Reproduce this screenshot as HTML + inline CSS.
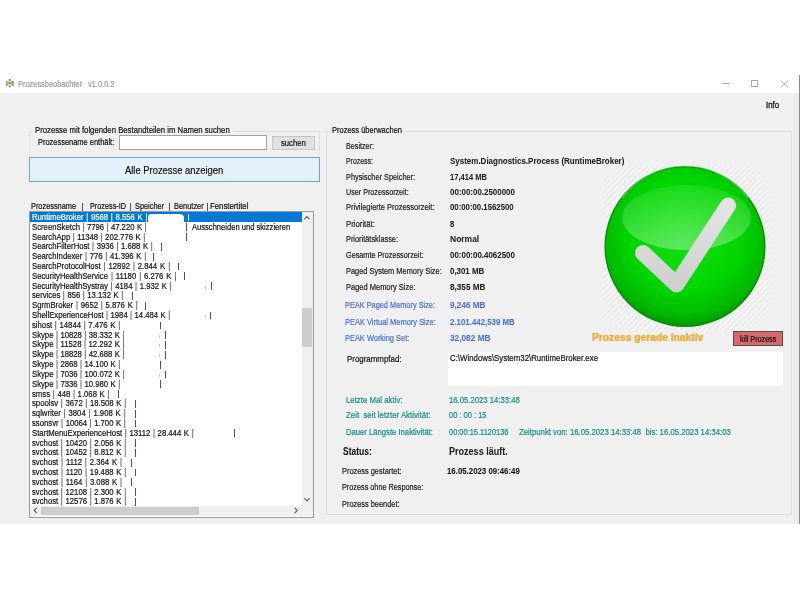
<!DOCTYPE html>
<html><head><meta charset="utf-8"><style>
html,body{margin:0;padding:0;}
body{width:800px;height:600px;position:relative;overflow:hidden;background:#fff;font-family:"Liberation Sans",sans-serif;}
.t{position:absolute;white-space:pre;line-height:0;transform-origin:0 0;-webkit-text-stroke:0.2px currentColor;}
.r{position:absolute;}
.p{color:#4a3a58;-webkit-text-stroke:0.1px #4a3a58;}
</style></head><body>
<div class="t" style="left:17.60px;top:84.05px;font-size:8.5px;color:#9a9a9a;transform:scaleX(0.8728);">Prozessbeobachter   v1.0.0.2</div>
<div class="r" style="left:721.5px;top:83px;width:7px;height:0.9px;background:#a8a8a8"></div>
<div class="r" style="left:751px;top:80.3px;width:7px;height:6.5px;border:0.9px solid #a8a8a8;box-sizing:border-box"></div>
<svg class="r" style="left:780px;top:79.8px" width="9" height="8" viewBox="0 0 9 8"><path d="M0.7 0.5 L8 7.5 M8 0.5 L0.7 7.5" stroke="#a8a8a8" stroke-width="0.9" fill="none"/></svg>
<div class="r" style="left:0px;top:93px;width:799px;height:430.5px;background:#f0f0f0"></div>
<div class="r" style="left:794px;top:93px;width:0.6px;height:430.5px;background:#e4e4e4"></div>
<div class="r" style="left:797px;top:93px;width:0.6px;height:430.5px;background:#e4e4e4"></div>
<div class="r" style="left:799px;top:75px;width:1px;height:448.5px;background:#8a8a8a"></div>
<div class="t" style="left:766.00px;top:104.55px;font-size:8.5px;color:#222;transform:scaleX(0.9310);-webkit-text-stroke:0.35px #222;">Info</div>
<div class="r" style="left:29px;top:130.5px;width:290.5px;height:23px;border:1px solid #dedede;border-bottom:none;box-sizing:border-box"></div>
<div class="r" style="left:33px;top:125px;width:200px;height:8px;background:#f0f0f0"></div>
<div class="t" style="left:35.00px;top:129.75px;font-size:8.5px;color:#111;transform:scaleX(0.9117);">Prozesse mit folgenden Bestandteilen im Namen suchen</div>
<div class="t" style="left:37.50px;top:142.05px;font-size:8.5px;color:#111;transform:scaleX(0.8771);">Prozessename enthält:</div>
<div class="r" style="left:118.8px;top:135.4px;width:148.5px;height:14.8px;background:#fff;border:1px solid #a2a2a2;box-sizing:border-box"></div>
<div class="r" style="left:272.3px;top:136.2px;width:43.2px;height:13.4px;background:#e1e1e1;border:1px solid #c4c4c4;box-sizing:border-box"></div>
<div class="t" style="left:281.00px;top:142.55px;font-size:8.5px;color:#111;transform:scaleX(0.9048);">suchen</div>
<div class="r" style="left:29.3px;top:156.7px;width:290.3px;height:25.2px;background:#e5f1fb;border:1px solid #62a8ea;box-sizing:border-box"></div>
<div class="t" style="left:125.10px;top:169.73px;font-size:10.6px;color:#111;transform:scaleX(0.8865);">Alle Prozesse anzeigen</div>
<div class="t" style="left:31.00px;top:206.35px;font-size:8.5px;color:#111;transform:scaleX(0.8659);">Prozessname</div>
<div class="t" style="left:89.50px;top:206.35px;font-size:8.5px;color:#111;transform:scaleX(0.8564);">Prozess-ID</div>
<div class="t" style="left:135.40px;top:206.35px;font-size:8.5px;color:#111;transform:scaleX(0.8674);">Speicher</div>
<div class="t" style="left:174.40px;top:206.35px;font-size:8.5px;color:#111;transform:scaleX(0.8730);">Benutzer</div>
<div class="t" style="left:210.10px;top:206.35px;font-size:8.5px;color:#111;transform:scaleX(0.9133);">Fenstertitel</div>
<div class="r" style="left:82.25px;top:203px;width:0.7px;height:7.5px;background:#5a4a60"></div>
<div class="r" style="left:130.25px;top:203px;width:0.7px;height:7.5px;background:#5a4a60"></div>
<div class="r" style="left:168.65px;top:203px;width:0.7px;height:7.5px;background:#5a4a60"></div>
<div class="r" style="left:207.05px;top:203px;width:0.7px;height:7.5px;background:#5a4a60"></div>
<div class="r" style="left:28.5px;top:211px;width:285.5px;height:306.5px;background:#fff;border:1px solid #9a9a9a;box-sizing:border-box"></div>
<div class="r" style="left:29.5px;top:212px;width:272.5px;height:293.9px;overflow:hidden">
<div class="r" style="left:0px;top:0.30000000000001137px;width:272px;height:9.5px;background:#0078d7"></div>
<div class="t" style="left:2.40px;top:4.95px;font-size:8.5px;color:#fff;transform:scaleX(0.9085);word-spacing:0.615px;">RuntimeBroker | 9568 | 8.556 K |</div>
<div class="r" style="left:118.0px;top:2.100000000000011px;width:36.5px;height:14px;background:#fff;border-radius:3px 4px 0 0"></div>
<div class="r" style="left:158.65px;top:1.6000000000000112px;width:0.7px;height:7.8px;background:#fff"></div>
<div class="t" style="left:2.40px;top:14.76px;font-size:8.5px;color:#111;transform:scaleX(0.9085);word-spacing:0.272px;">ScreenSketch <span class="p">|</span> 7796 <span class="p">|</span> 47.220 K <span class="p">|</span></div>
<div class="r" style="left:156.55px;top:11.410000000000014px;width:0.7px;height:7.8px;background:#5a4a68"></div>
<div class="t" style="left:162.25px;top:14.76px;font-size:8.5px;color:#111;transform:scaleX(0.8924);">Ausschneiden und skizzieren</div>
<div class="t" style="left:2.40px;top:24.57px;font-size:8.5px;color:#111;transform:scaleX(0.9085);word-spacing:0.373px;">SearchApp <span class="p">|</span> 11348 <span class="p">|</span> 202.776 K <span class="p">|</span></div>
<div class="r" style="left:156.45000000000002px;top:21.220000000000017px;width:0.7px;height:7.8px;background:#5a4a68"></div>
<div class="t" style="left:2.40px;top:34.38px;font-size:8.5px;color:#111;transform:scaleX(0.9085);word-spacing:0.467px;">SearchFilterHost <span class="p">|</span> 3936 <span class="p">|</span> 1.688 K <span class="p">|</span></div>
<div class="r" style="left:131.45000000000002px;top:31.03000000000002px;width:0.7px;height:7.8px;background:#5a4a68"></div>
<div class="t" style="left:2.40px;top:44.19px;font-size:8.5px;color:#111;transform:scaleX(0.9085);word-spacing:0.611px;">SearchIndexer <span class="p">|</span> 776 <span class="p">|</span> 41.396 K <span class="p">|</span></div>
<div class="r" style="left:123.95000000000002px;top:40.840000000000025px;width:0.7px;height:7.8px;background:#5a4a68"></div>
<div class="t" style="left:2.40px;top:54.00px;font-size:8.5px;color:#111;transform:scaleX(0.9085);word-spacing:0.841px;">SearchProtocolHost <span class="p">|</span> 12892 <span class="p">|</span> 2.844 K <span class="p">|</span></div>
<div class="r" style="left:148.45000000000002px;top:50.65000000000003px;width:0.7px;height:7.8px;background:#5a4a68"></div>
<div class="t" style="left:2.40px;top:63.81px;font-size:8.5px;color:#111;transform:scaleX(0.9085);word-spacing:0.869px;">SecurityHealthService <span class="p">|</span> 11180 <span class="p">|</span> 6.276 K <span class="p">|</span></div>
<div class="r" style="left:154.45000000000002px;top:60.46000000000002px;width:0.7px;height:7.8px;background:#5a4a68"></div>
<div class="t" style="left:2.40px;top:73.62px;font-size:8.5px;color:#111;transform:scaleX(0.9085);word-spacing:0.530px;">SecurityHealthSystray <span class="p">|</span> 4184 <span class="p">|</span> 1.932 K <span class="p">|</span></div>
<div class="r" style="left:181.45000000000002px;top:70.27000000000002px;width:0.7px;height:7.8px;background:#5a4a68"></div>
<div class="r" style="left:175.1px;top:73.57000000000002px;width:0.8px;height:3px;background:#c8c8d0"></div>
<div class="t" style="left:2.40px;top:83.43px;font-size:8.5px;color:#111;transform:scaleX(0.9085);word-spacing:0.410px;">services <span class="p">|</span> 856 <span class="p">|</span> 13.132 K <span class="p">|</span></div>
<div class="r" style="left:102.15px;top:80.08000000000003px;width:0.7px;height:7.8px;background:#5a4a68"></div>
<div class="t" style="left:2.40px;top:93.24px;font-size:8.5px;color:#111;transform:scaleX(0.9085);word-spacing:0.708px;">SgrmBroker <span class="p">|</span> 9652 <span class="p">|</span> 5.876 K <span class="p">|</span></div>
<div class="r" style="left:115.95000000000002px;top:89.89000000000003px;width:0.7px;height:7.8px;background:#5a4a68"></div>
<div class="t" style="left:2.40px;top:103.05px;font-size:8.5px;color:#111;transform:scaleX(0.9085);word-spacing:0.289px;">ShellExperienceHost <span class="p">|</span> 1984 <span class="p">|</span> 14.484 K <span class="p">|</span></div>
<div class="r" style="left:180.95000000000002px;top:99.70000000000003px;width:0.7px;height:7.8px;background:#5a4a68"></div>
<div class="r" style="left:175.1px;top:103.00000000000003px;width:0.8px;height:3px;background:#c8c8d0"></div>
<div class="t" style="left:2.40px;top:112.86px;font-size:8.5px;color:#111;transform:scaleX(0.9085);word-spacing:0.566px;">sihost <span class="p">|</span> 14844 <span class="p">|</span> 7.476 K <span class="p">|</span></div>
<div class="r" style="left:130.95000000000002px;top:109.51000000000003px;width:0.7px;height:7.8px;background:#5a4a68"></div>
<div class="t" style="left:2.40px;top:122.67px;font-size:8.5px;color:#111;transform:scaleX(0.9085);word-spacing:0.331px;">Skype <span class="p">|</span> 10828 <span class="p">|</span> 38.332 K <span class="p">|</span></div>
<div class="r" style="left:135.15px;top:119.31999999999998px;width:0.7px;height:7.8px;background:#5a4a68"></div>
<div class="r" style="left:129.4px;top:122.61999999999998px;width:0.8px;height:3px;background:#c8c8d0"></div>
<div class="t" style="left:2.40px;top:132.48px;font-size:8.5px;color:#111;transform:scaleX(0.9085);word-spacing:0.436px;">Skype <span class="p">|</span> 11528 <span class="p">|</span> 12.292 K <span class="p">|</span></div>
<div class="r" style="left:135.15px;top:129.13000000000002px;width:0.7px;height:7.8px;background:#5a4a68"></div>
<div class="r" style="left:129.4px;top:132.43000000000004px;width:0.8px;height:3px;background:#c8c8d0"></div>
<div class="t" style="left:2.40px;top:142.29px;font-size:8.5px;color:#111;transform:scaleX(0.9085);word-spacing:0.331px;">Skype <span class="p">|</span> 18828 <span class="p">|</span> 42.688 K <span class="p">|</span></div>
<div class="r" style="left:135.15px;top:138.93999999999997px;width:0.7px;height:7.8px;background:#5a4a68"></div>
<div class="r" style="left:129.4px;top:142.23999999999998px;width:0.8px;height:3px;background:#c8c8d0"></div>
<div class="t" style="left:2.40px;top:152.10px;font-size:8.5px;color:#111;transform:scaleX(0.9085);word-spacing:0.330px;">Skype <span class="p">|</span> 2868 <span class="p">|</span> 14.100 K <span class="p">|</span></div>
<div class="r" style="left:130.95000000000002px;top:148.75000000000003px;width:0.7px;height:7.8px;background:#5a4a68"></div>
<div class="t" style="left:2.40px;top:161.91px;font-size:8.5px;color:#111;transform:scaleX(0.9085);word-spacing:0.331px;">Skype <span class="p">|</span> 7036 <span class="p">|</span> 100.072 K <span class="p">|</span></div>
<div class="r" style="left:135.15px;top:158.55999999999997px;width:0.7px;height:7.8px;background:#5a4a68"></div>
<div class="r" style="left:129.4px;top:161.85999999999999px;width:0.8px;height:3px;background:#c8c8d0"></div>
<div class="t" style="left:2.40px;top:171.72px;font-size:8.5px;color:#111;transform:scaleX(0.9085);word-spacing:0.330px;">Skype <span class="p">|</span> 7336 <span class="p">|</span> 10.980 K <span class="p">|</span></div>
<div class="r" style="left:130.95000000000002px;top:168.37000000000003px;width:0.7px;height:7.8px;background:#5a4a68"></div>
<div class="t" style="left:2.40px;top:181.53px;font-size:8.5px;color:#111;transform:scaleX(0.9085);word-spacing:0.575px;">smss <span class="p">|</span> 448 <span class="p">|</span> 1.068 K <span class="p">|</span></div>
<div class="r" style="left:88.45px;top:178.17999999999998px;width:0.7px;height:7.8px;background:#5a4a68"></div>
<div class="t" style="left:2.40px;top:191.34px;font-size:8.5px;color:#111;transform:scaleX(0.9085);word-spacing:0.564px;">spoolsv <span class="p">|</span> 3672 <span class="p">|</span> 18.508 K <span class="p">|</span></div>
<div class="r" style="left:105.65px;top:187.99000000000004px;width:0.7px;height:7.8px;background:#5a4a68"></div>
<div class="t" style="left:2.40px;top:201.15px;font-size:8.5px;color:#111;transform:scaleX(0.9085);word-spacing:0.790px;">sqlwriter <span class="p">|</span> 3804 <span class="p">|</span> 1.908 K <span class="p">|</span></div>
<div class="r" style="left:105.15px;top:197.79999999999998px;width:0.7px;height:7.8px;background:#5a4a68"></div>
<div class="t" style="left:2.40px;top:210.96px;font-size:8.5px;color:#111;transform:scaleX(0.9085);word-spacing:0.395px;">ssonsvr <span class="p">|</span> 10064 <span class="p">|</span> 1.700 K <span class="p">|</span></div>
<div class="r" style="left:105.15px;top:207.61000000000004px;width:0.7px;height:7.8px;background:#5a4a68"></div>
<div class="t" style="left:2.40px;top:220.77px;font-size:8.5px;color:#111;transform:scaleX(0.9085);word-spacing:0.532px;">StartMenuExperienceHost <span class="p">|</span> 13112 <span class="p">|</span> 28.444 K <span class="p">|</span></div>
<div class="r" style="left:204.65px;top:217.42px;width:0.7px;height:7.8px;background:#5a4a68"></div>
<div class="t" style="left:2.40px;top:230.58px;font-size:8.5px;color:#111;transform:scaleX(0.9085);word-spacing:0.565px;">svchost <span class="p">|</span> 10420 <span class="p">|</span> 2.056 K <span class="p">|</span></div>
<div class="r" style="left:105.65px;top:227.23000000000005px;width:0.7px;height:7.8px;background:#5a4a68"></div>
<div class="t" style="left:2.40px;top:240.39px;font-size:8.5px;color:#111;transform:scaleX(0.9085);word-spacing:0.565px;">svchost <span class="p">|</span> 10452 <span class="p">|</span> 8.812 K <span class="p">|</span></div>
<div class="r" style="left:105.65px;top:237.04px;width:0.7px;height:7.8px;background:#5a4a68"></div>
<div class="t" style="left:2.40px;top:250.20px;font-size:8.5px;color:#111;transform:scaleX(0.9085);word-spacing:0.793px;">svchost <span class="p">|</span> 1112 <span class="p">|</span> 2.364 K <span class="p">|</span></div>
<div class="r" style="left:101.45000000000002px;top:246.85px;width:0.7px;height:7.8px;background:#5a4a68"></div>
<div class="t" style="left:2.40px;top:260.01px;font-size:8.5px;color:#111;transform:scaleX(0.9085);word-spacing:0.670px;">svchost <span class="p">|</span> 1120 <span class="p">|</span> 19.488 K <span class="p">|</span></div>
<div class="r" style="left:105.65px;top:256.66px;width:0.7px;height:7.8px;background:#5a4a68"></div>
<div class="t" style="left:2.40px;top:269.82px;font-size:8.5px;color:#111;transform:scaleX(0.9085);word-spacing:0.688px;">svchost <span class="p">|</span> 1164 <span class="p">|</span> 3.088 K <span class="p">|</span></div>
<div class="r" style="left:101.45000000000002px;top:266.47px;width:0.7px;height:7.8px;background:#5a4a68"></div>
<div class="t" style="left:2.40px;top:279.63px;font-size:8.5px;color:#111;transform:scaleX(0.9085);word-spacing:0.565px;">svchost <span class="p">|</span> 12108 <span class="p">|</span> 2.300 K <span class="p">|</span></div>
<div class="r" style="left:105.65px;top:276.28000000000003px;width:0.7px;height:7.8px;background:#5a4a68"></div>
<div class="t" style="left:2.40px;top:289.44px;font-size:8.5px;color:#111;transform:scaleX(0.9085);word-spacing:0.565px;">svchost <span class="p">|</span> 12576 <span class="p">|</span> 1.876 K <span class="p">|</span></div>
<div class="r" style="left:105.65px;top:286.09000000000003px;width:0.7px;height:7.8px;background:#5a4a68"></div>
</div>
<div class="r" style="left:302px;top:212px;width:11px;height:294px;background:#f0f0f0"></div>
<div class="r" style="left:302.3px;top:308.1px;width:9.6px;height:39.3px;background:#cdcdcd"></div>
<div class="r" style="left:29.5px;top:506px;width:272.5px;height:10px;background:#f0f0f0"></div>
<div class="r" style="left:41.3px;top:507.3px;width:157.7px;height:8px;background:#cdcdcd"></div>
<div class="r" style="left:302px;top:506px;width:11px;height:10px;background:#f0f0f0"></div>
<svg class="r" style="left:0;top:0" width="800" height="600"><path d="M304.1 219.35 L306.8 216.65 L309.5 219.35 M304.3 498.15 L307 500.85 L309.7 498.15 M36.85 507.8 L34.15 510.5 L36.85 513.2 M294.65 507.8 L297.35 510.5 L294.65 513.2" stroke="#606060" stroke-width="1.15" fill="none"/></svg>
<div class="r" style="left:326.2px;top:130.6px;width:465.6px;height:384.6px;border:1px solid #dcdcdc;box-sizing:border-box"></div>
<div class="r" style="left:330px;top:125px;width:74px;height:8px;background:#f0f0f0"></div>
<div class="t" style="left:331.90px;top:129.55px;font-size:8.5px;color:#111;transform:scaleX(0.8819);">Prozess überwachen</div>
<div class="t" style="left:346.40px;top:146.05px;font-size:8.5px;color:#222;transform:scaleX(0.8468);">Besitzer:</div>
<div class="t" style="left:345.50px;top:161.25px;font-size:8.5px;color:#222;transform:scaleX(0.8105);">Prozess:</div>
<div class="t" style="left:450.00px;top:161.22px;font-size:8.6px;color:#222;font-weight:bold;-webkit-text-stroke:0.05px currentColor;transform:scaleX(0.9290);">System.Diagnostics.Process (RuntimeBroker)</div>
<div class="t" style="left:345.50px;top:176.65px;font-size:8.5px;color:#222;transform:scaleX(0.8655);">Physischer Speicher:</div>
<div class="t" style="left:450.00px;top:176.62px;font-size:8.6px;color:#222;font-weight:bold;-webkit-text-stroke:0.05px currentColor;transform:scaleX(0.8795);">17,414 MB</div>
<div class="t" style="left:345.50px;top:191.90px;font-size:8.5px;color:#222;transform:scaleX(0.8455);">User Prozessorzeit:</div>
<div class="t" style="left:450.00px;top:191.87px;font-size:8.6px;color:#222;font-weight:bold;-webkit-text-stroke:0.05px currentColor;transform:scaleX(0.9247);">00:00:00.2500000</div>
<div class="t" style="left:345.50px;top:207.30px;font-size:8.5px;color:#222;transform:scaleX(0.8786);">Privilegierte Prozessorzeit:</div>
<div class="t" style="left:450.00px;top:207.27px;font-size:8.6px;color:#222;font-weight:bold;-webkit-text-stroke:0.05px currentColor;transform:scaleX(0.9069);">00:00:00.1562500</div>
<div class="t" style="left:345.50px;top:223.65px;font-size:8.5px;color:#222;transform:scaleX(0.9132);">Priorität:</div>
<div class="t" style="left:450.00px;top:223.62px;font-size:8.6px;color:#222;font-weight:bold;-webkit-text-stroke:0.05px currentColor;transform:scaleX(0.8886);">8</div>
<div class="t" style="left:345.50px;top:239.45px;font-size:8.5px;color:#222;transform:scaleX(0.8668);">Prioritätsklasse:</div>
<div class="t" style="left:450.00px;top:239.42px;font-size:8.6px;color:#222;font-weight:bold;-webkit-text-stroke:0.05px currentColor;transform:scaleX(0.9872);">Normal</div>
<div class="t" style="left:345.50px;top:255.15px;font-size:8.5px;color:#222;transform:scaleX(0.8545);">Gesamte Prozessorzeit:</div>
<div class="t" style="left:450.00px;top:255.12px;font-size:8.6px;color:#222;font-weight:bold;-webkit-text-stroke:0.05px currentColor;transform:scaleX(0.9247);">00:00:00.4062500</div>
<div class="t" style="left:345.50px;top:270.95px;font-size:8.5px;color:#222;transform:scaleX(0.8732);">Paged System Memory Size:</div>
<div class="t" style="left:450.00px;top:270.92px;font-size:8.6px;color:#222;font-weight:bold;-webkit-text-stroke:0.05px currentColor;transform:scaleX(0.9186);">0,301 MB</div>
<div class="t" style="left:345.50px;top:286.65px;font-size:8.5px;color:#222;transform:scaleX(0.8809);">Paged Memory Size:</div>
<div class="t" style="left:450.00px;top:286.62px;font-size:8.6px;color:#222;font-weight:bold;-webkit-text-stroke:0.05px currentColor;transform:scaleX(0.9521);">8,355 MB</div>
<div class="t" style="left:345.00px;top:305.05px;font-size:8.5px;color:#4a6fdc;transform:scaleX(0.8659);">PEAK Paged Memory Size:</div>
<div class="t" style="left:449.50px;top:305.05px;font-size:8.5px;color:#4a6fdc;font-weight:bold;-webkit-text-stroke:0.05px currentColor;transform:scaleX(0.9633);">9,246 MB</div>
<div class="t" style="left:345.00px;top:321.55px;font-size:8.5px;color:#4a6fdc;transform:scaleX(0.8785);">PEAK Virtual Memory Size:</div>
<div class="t" style="left:449.50px;top:321.55px;font-size:8.5px;color:#4a6fdc;font-weight:bold;-webkit-text-stroke:0.05px currentColor;transform:scaleX(0.9258);">2.101.442,539 MB</div>
<div class="t" style="left:345.00px;top:337.80px;font-size:8.5px;color:#4a6fdc;transform:scaleX(0.8737);">PEAK Working Set:</div>
<div class="t" style="left:449.50px;top:337.80px;font-size:8.5px;color:#4a6fdc;font-weight:bold;-webkit-text-stroke:0.05px currentColor;transform:scaleX(0.9741);">32,082 MB</div>
<div class="t" style="left:346.75px;top:359.05px;font-size:8.5px;color:#111;transform:scaleX(0.9304);">Programmpfad:</div>
<div class="r" style="left:448px;top:351.8px;width:334.7px;height:34.2px;background:#fff"></div>
<div class="t" style="left:449.50px;top:357.55px;font-size:8.5px;color:#111;transform:scaleX(0.9242);">C:\Windows\System32\RuntimeBroker.exe</div>
<div class="t" style="left:345.50px;top:399.55px;font-size:8.5px;color:#10908c;transform:scaleX(0.9200);">Letzte Mal aktiv:</div>
<div class="t" style="left:448.75px;top:399.55px;font-size:8.5px;color:#10908c;transform:scaleX(0.9072);">16.05.2023 14:33:48</div>
<div class="t" style="left:345.50px;top:415.30px;font-size:8.5px;color:#10908c;transform:scaleX(0.9221);">Zeit  seit letzter Aktivität:</div>
<div class="t" style="left:448.75px;top:415.30px;font-size:8.5px;color:#10908c;transform:scaleX(0.8817);">00 : 00 : 15</div>
<div class="t" style="left:345.50px;top:431.55px;font-size:8.5px;color:#10908c;transform:scaleX(0.9026);">Dauer Längste Inaktivität:</div>
<div class="t" style="left:448.75px;top:431.55px;font-size:8.5px;color:#10908c;transform:scaleX(0.8762);">00:00:15.1120136</div>
<div class="t" style="left:518.60px;top:431.55px;font-size:8.5px;color:#10908c;transform:scaleX(0.9128);">Zeitpunkt von: 16.05.2023 14:33:48  bis: 16.05.2023 14:34:03</div>
<div class="t" style="left:342.50px;top:451.33px;font-size:10.6px;color:#111;font-weight:bold;-webkit-text-stroke:0.05px currentColor;transform:scaleX(0.8003);">Status:</div>
<div class="t" style="left:448.75px;top:451.19px;font-size:11px;color:#222;font-weight:bold;-webkit-text-stroke:0.05px currentColor;transform:scaleX(0.8214);">Prozess läuft.</div>
<div class="t" style="left:341.75px;top:471.30px;font-size:8.5px;color:#222;transform:scaleX(0.8686);">Prozess gestartet:</div>
<div class="t" style="left:446.75px;top:471.30px;font-size:8.5px;color:#111;font-weight:bold;-webkit-text-stroke:0.05px currentColor;transform:scaleX(0.9217);">16.05.2023 09:46:49</div>
<div class="t" style="left:341.75px;top:487.05px;font-size:8.5px;color:#222;transform:scaleX(0.8555);">Prozess ohne Response:</div>
<div class="t" style="left:341.75px;top:504.05px;font-size:8.5px;color:#222;transform:scaleX(0.8692);">Prozess beendet:</div>
<div class="t" style="left:592.40px;top:336.72px;font-size:11.2px;color:#f7a21b;font-weight:bold;-webkit-text-stroke:0.05px currentColor;transform:scaleX(0.9173);-webkit-text-stroke:0.2px #f7a21b;">Prozess gerade inaktiv</div>
<div class="r" style="left:733.2px;top:330.5px;width:49.5px;height:15.1px;background:#d8686c;border:1px solid #505050;box-sizing:border-box"></div>
<div class="t" style="left:739.50px;top:338.55px;font-size:8.5px;color:#111;transform:scaleX(0.8445);">kill Prozess</div>
<div class="r" style="left:603px;top:165px;width:166px;height:166px;background:repeating-linear-gradient(-45deg,#f5f5f5 0px,#f5f5f5 2px,#e9e9e9 2px,#e9e9e9 4px);-webkit-mask-image:radial-gradient(circle at 50% 50%,#000 66%,rgba(0,0,0,0.55) 85%,transparent 100%)"></div>
<svg class="r" style="left:600px;top:162px" width="170" height="170" viewBox="0 0 170 170">
<defs>
<radialGradient id="g1" cx="0.5" cy="0.42" r="0.58">
<stop offset="0" stop-color="#18e018"/><stop offset="0.6" stop-color="#00d600"/><stop offset="0.9" stop-color="#00b800"/><stop offset="1" stop-color="#009600"/>
</radialGradient>
<linearGradient id="g2" x1="0" y1="0" x2="0" y2="1"><stop offset="0" stop-color="#fff" stop-opacity="0.08"/><stop offset="0.6" stop-color="#fff" stop-opacity="0.2"/><stop offset="1" stop-color="#fff" stop-opacity="0.32"/></linearGradient>
<linearGradient id="g3" x1="0" y1="0" x2="0" y2="1"><stop offset="0" stop-color="#e4e4e4"/><stop offset="1" stop-color="#cfcfcf"/></linearGradient>
</defs>
<circle cx="85" cy="84.5" r="80.5" fill="#008a00"/>
<circle cx="85" cy="84.5" r="79.3" fill="url(#g1)"/>
<path d="M22 36 A78 78 0 0 1 148 36" stroke="#8af58a" stroke-opacity="0.45" stroke-width="1.6" fill="none"/>
<ellipse cx="86.6" cy="55.6" rx="64.5" ry="32.5" fill="url(#g2)"/>
<path d="M43 91 L76.5 122.5 L128 43.5" stroke="url(#g3)" stroke-width="16" stroke-linecap="round" stroke-linejoin="round" fill="none"/>
</svg>
<svg class="r" style="left:0;top:74px" width="20" height="18" viewBox="0 0 20 18"><rect x="5.9" y="6.8" width="1.9" height="5.2" fill="#9a9a9a"/><rect x="11.9" y="6.8" width="1.9" height="5.2" fill="#8a9a90"/><rect x="8" y="7.5" width="3.9" height="3" fill="#d89a50"/><ellipse cx="9.8" cy="6" rx="1.3" ry="1" fill="#7a8a9a"/><ellipse cx="9.8" cy="12.3" rx="1.2" ry="0.9" fill="#6a7a80"/></svg>
</body></html>
